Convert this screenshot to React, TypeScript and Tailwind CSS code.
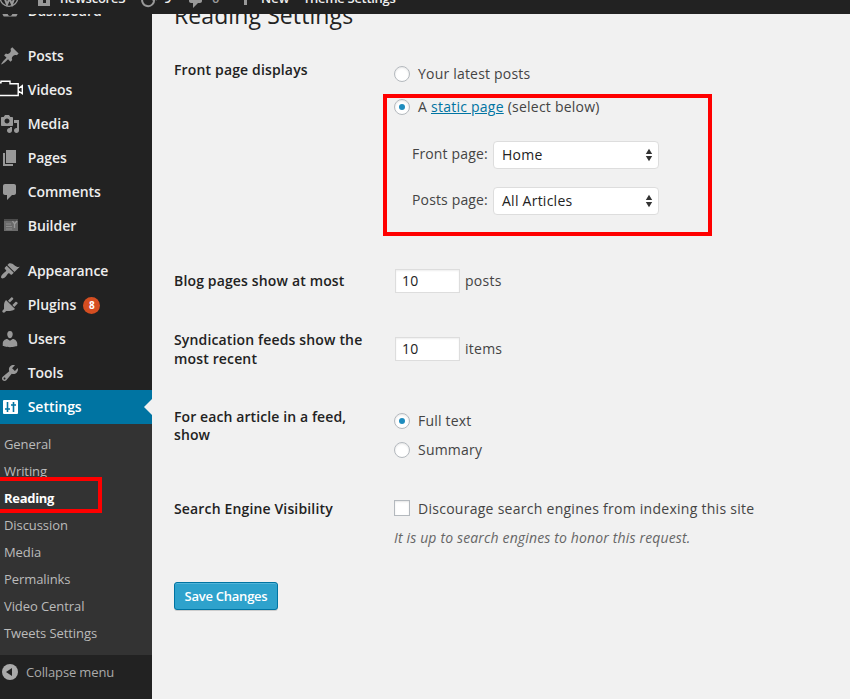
import React from "react";

const paths = {
  pin: "M10.44 3.02l1.82-1.82 6.36 6.35-1.83 1.82c-1.05-.68-2.48-.57-3.41.36l-.75.75c-.92.93-1.04 2.35-.35 3.41l-1.83 1.82-2.41-2.41-2.8 2.79c-.42.42-3.38 2.71-3.8 2.29s1.86-3.39 2.28-3.81l2.79-2.79L4.1 9.36l1.83-1.82c1.05.69 2.48.57 3.4-.36l.75-.75c.93-.92 1.05-2.35.36-3.41z",
  media: "M13 11V4c0-.55-.45-1-1-1h-1.67L9 1H5L3.67 3H2c-.55 0-1 .45-1 1v7c0 .55.45 1 1 1h10c.55 0 1-.45 1-1zM7 4.5c1.38 0 2.5 1.12 2.5 2.5S8.38 9.5 7 9.5 4.5 8.38 4.5 7 5.62 4.5 7 4.5zM14 6h5v10.5c0 1.38-1.12 2.5-2.5 2.5S14 17.88 14 16.5s1.12-2.5 2.5-2.5c.17 0 .34.02.5.05V9h-3V6zm-4 8.05V13h2v3.5c0 1.38-1.12 2.5-2.5 2.5S7 17.88 7 16.5 8.12 14 9.5 14c.17 0 .34.02.5.05z",
  page: "M6 15V2h10v13H6zm-1 1h8v2H3V5h2v11z",
  comment: "M5 2h9c1.1 0 2 .9 2 2v7c0 1.1-.9 2-2 2h-2l-5 5v-5H5c-1.1 0-2-.9-2-2V4c0-1.1.9-2 2-2z",
  brush: "M14.48 11.06L7.41 3.99l1.5-1.5c.5-.56 2.3-.47 3.51.32 1.21.8 1.43 1.28 2.91 2.1 1.18.64 2.45 1.26 4.45.85zm-.71.71L6.7 4.7 4.93 6.47c-.39.39-.39 1.02 0 1.41l1.06 1.06c.39.39.39 1.03 0 1.42-.6.6-1.43 1.11-2.21 1.69-.35.26-.7.53-1.01.84C1.43 14.23.4 16.08 1.4 17.07c.99 1 2.84-.03 4.18-1.36.31-.31.58-.66.85-1.02.57-.78 1.08-1.61 1.69-2.21.39-.39 1.02-.39 1.41 0l1.06 1.06c.39.39 1.02.39 1.41 0z",
  plug: "M13.11 4.36L9.87 7.6 8 5.73l3.24-3.24c.35-.34 1.05-.2 1.56.32.52.51.66 1.21.31 1.55zm-8 1.77l.91-1.12 9.01 9.01-1.19.84c-.71.71-2.63 1.16-3.82 1.16H6.14L4.9 17.26c-.59.59-1.54.59-2.12 0-.59-.58-.59-1.53 0-2.12l1.24-1.24v-3.88c0-1.13.4-3.19 1.09-3.89zm7.26 3.97l3.24-3.24c.34-.35 1.04-.21 1.55.31.52.51.66 1.21.31 1.55l-3.24 3.25z",
  user: "M10 9.25c-2.27 0-2.73-3.44-2.73-3.44C7 4.02 7.82 2 9.97 2c2.16 0 2.98 2.02 2.71 3.81 0 0-.41 3.44-2.68 3.44zm0 2.57L12.72 10c2.39 0 4.52 2.33 4.52 4.53v2.49s-3.65 1.13-7.24 1.13c-3.65 0-7.24-1.13-7.24-1.13v-2.49c0-2.25 1.94-4.48 4.47-4.48z",
  wrench: "M16.68 9.77c-1.34 1.34-3.3 1.67-4.95.99l-5.41 6.52c-.99.99-2.59.99-3.58 0s-.99-2.59 0-3.57l6.52-5.42c-.68-1.65-.35-3.61.99-4.95 1.28-1.28 3.12-1.62 4.72-1.06l-2.89 2.89 2.82 2.82 2.86-2.87c.53 1.58.18 3.39-1.08 4.65zM3.81 16.21c.4.39 1.04.39 1.43 0 .4-.4.4-1.04 0-1.43-.39-.4-1.03-.4-1.43 0-.39.39-.39 1.03 0 1.43z",
  gauge: "M3.76 15.500h12.48c1.1-1.4 1.76-3.1 1.76-5 0-4.4-3.6-8-8-8s-8 3.6-8 8c0 1.9.66 3.6 1.76 5zM10 8l2 4a2.200 2.200 0 1 1-4 0z",
};

const Icon = ({ d }: { d: string }) => (
  <svg viewBox="0 0 20 20" className="h-5 w-5 shrink-0 fill-[#999]" fillRule="evenodd"><path d={d} /></svg>
);

const Camera = () => (
  <svg viewBox="0 0 24 20" className="-mr-1 h-5 w-6 shrink-0" fill="none" stroke="#fff" strokeWidth="1.400">
    <path d="M-1 2.700H1V1.200H10V3.700H18.200V15.500H-1M18.500 8.500L22.300 5.700V13.700L18.500 11" />
  </svg>
);

const Builder = () => (
  <svg viewBox="0 0 20 20" className="h-5 w-5 shrink-0">
    <path d="M4 3h14v12H4z" fill="#6b6b6b" />
    <path d="M4 3h14v2H4z" fill="#4c4c4c" />
    <path d="M6 8h5M6 10.500h6M6 13h6" stroke="#8c8c8c" />
    <path d="M12.500 5l2 3v4M17 5l-2.500 3" stroke="#999" strokeWidth="1.300" fill="none" />
  </svg>
);

const Settings = () => (
  <svg viewBox="0 0 20 20" className="h-5 w-5 shrink-0">
    <rect x="3" y="3" width="15" height="14" rx="1" fill="#fff" />
    <path d="M7.500 5v10M5 12h5M13.500 5v10M11 8h5" stroke="#0074a2" strokeWidth="1.600" />
  </svg>
);

function Item({ icon, label, children, active }: { icon: React.ReactNode; label: string; children?: React.ReactNode; active?: boolean }) {
  return (
    <li className={active ? "relative flex h-[34px] items-center bg-[#0074a2] text-white" : "flex h-[34px] items-center text-[#eee]"}>
      {icon}
      <span className="ml-[7.700px] text-[14px] leading-[18px] font-semibold tracking-[-0.03px]">{label}</span>
      {children}
    </li>
  );
}

function Radio({ checked }: { checked?: boolean }) {
  return (
    <span className="relative top-px mr-2 flex h-4 w-4 shrink-0 items-center justify-center rounded-full border border-[#b4b9be] bg-white shadow-[inset_0_1px_2px_rgba(0,0,0,.1)]">
      {checked && <span className="h-1.5 w-1.5 rounded-full bg-[#1e8cbe]" />}
    </span>
  );
}

function Select({ value }: { value: string }) {
  return (
    <button className="ml-[5px] flex h-7 w-[166px] items-center justify-between rounded-[4px] border border-[#ddd] bg-white pr-[5px] pl-2 text-[#222]">
      <span className="pb-0.5 tracking-[0.25px]">{value}</span>
      <svg viewBox="0 0 8 14" className="h-[14px] w-2 fill-[#333]"><path d="M0.800 6L4 0.800L7.200 6ZM0.800 8H7.200L4 13.200Z" /></svg>
    </button>
  );
}

const Label = ({ children }: { children: React.ReactNode }) => (
  <div className="w-[220px] shrink-0 text-[14px] leading-[18.500px] font-semibold tracking-[0.15px] text-[#222]">{children}</div>
);

const NumberBox = () => (
  <div className="mr-[5px] ml-px flex h-6 w-[65px] items-center border border-[#ddd] bg-white pb-0.5 pl-1.5 text-[#222] shadow-[inset_0_1px_2px_rgba(0,0,0,.07)]">10</div>
);

const submenu = ["General", "Writing", "Reading", "Discussion", "Media", "Permalinks", "Video Central", "Tweets Settings"];

export default function App() {
  return (
    <div className="relative h-[699px] w-[850px] overflow-hidden bg-[#f1f1f1] font-['Open_Sans','Noto_Sans',sans-serif] text-[14px] text-[#444]">
      <header className="h-[14px] overflow-hidden bg-[#222] text-[13px] font-semibold text-[#eee]">
        <div className="-mt-[17px] flex h-8 items-center">
          <svg viewBox="0 0 20 20" className="mt-px h-5 w-5 shrink-0 overflow-visible">
            <circle cx="9" cy="7.500" r="8.800" fill="none" stroke="#999" strokeWidth="1.300" />
            <path d="M3 4l4 10.500L9.500 8.500 12 14.500l3.500-10M2 4h4.500l3 7" fill="none" stroke="#999" strokeWidth="2" />
          </svg>
          <svg viewBox="0 0 14 20" className="ml-[17px] h-5 w-[14px] shrink-0 fill-[#999]"><path fillRule="evenodd" d="M1 5l6-5 6 5v12H1zM6 9v5h3v-5z" /></svg>
          <span className="ml-[9px] w-[82px] tracking-[-0.25px]">newscore3</span>
          <svg viewBox="0 0 16 20" className="-ml-px h-5 w-4 shrink-0" fill="none" stroke="#999" strokeWidth="2"><path d="M2 8a6 6 0 1 0 11 2M11 11l3-3 2 3" /></svg>
          <span className="ml-[7px] w-[24px]">9</span>
          <svg viewBox="0 0 20 20" className="mt-0.5 -ml-[2px] h-5 w-5 shrink-0 fill-[#999]"><path d={paths.comment} /></svg>
          <span className="ml-[6px] w-[32px] text-[#999]">0</span>
          <svg viewBox="0 0 14 14" className="-ml-[6px] h-[14px] w-[14px] shrink-0" stroke="#999" strokeWidth="3"><path d="M7.500 0v13M1 4h13" /></svg>
          <span className="ml-[9px] w-[42px]">New</span>
          <span className="tracking-[-0.3px]">Theme Settings</span>
        </div>
      </header>

      <div className="flex h-[685px]">
        <nav className="w-[152px] shrink-0 overflow-hidden bg-[#222]">
          <ul className="-mt-5">
            <Item icon={<Icon d={paths.gauge} />} label="Dashboard" />
            <li className="h-[11px]" />
            <Item icon={<Icon d={paths.pin} />} label="Posts" />
            <Item icon={<Camera />} label="Videos" />
            <Item icon={<Icon d={paths.media} />} label="Media" />
            <Item icon={<Icon d={paths.page} />} label="Pages" />
            <Item icon={<Icon d={paths.comment} />} label="Comments" />
            <Item icon={<Builder />} label="Builder" />
            <li className="h-[11px]" />
            <Item icon={<Icon d={paths.brush} />} label="Appearance" />
            <Item icon={<Icon d={paths.plug} />} label="Plugins">
              <span className="ml-[7px] flex h-[17px] w-[17px] items-center justify-center rounded-full bg-[#d54e21] text-[10px] leading-none font-bold text-white">8</span>
            </Item>
            <Item icon={<Icon d={paths.user} />} label="Users" />
            <Item icon={<Icon d={paths.wrench} />} label="Tools" />
            <Item icon={<Settings />} label="Settings" active>
              <span className="absolute top-[9px] right-0 border-y-8 border-r-8 border-y-transparent border-r-[#f1f1f1]" />
            </Item>
          </ul>
          <ul className="h-[231px] bg-[#333] pt-[7px] pl-1 text-[13px] text-[#bbb]">
            {submenu.map((s) => (
              <li key={s} className={s === "Reading" ? "flex h-[27px] items-center font-bold tracking-[-0.3px] text-white" : "flex h-[27px] items-center tracking-[-0.08px]"}>{s}</li>
            ))}
          </ul>
          <div className="flex h-[34px] items-center text-[13px] text-[#aaa]">
            <svg viewBox="0 0 20 20" className="h-5 w-5"><circle cx="10" cy="10" r="8" fill="#aaa" /><path d="M12 6v8l-6-4z" fill="#222" /></svg>
            <span className="mt-0.5 ml-1.5 tracking-[-0.14px]">Collapse menu</span>
          </div>
        </nav>

        <main className="min-w-0 flex-1 pl-[22px]">
          <div className="h-9 overflow-hidden">
            <h1 className="-mt-[13px] text-[23px] leading-[29px] tracking-[0.1px] text-[#222]">Reading Settings</h1>
          </div>
          <section className="flex h-[206px] pt-[11px]">
            <Label>Front page displays</Label>
            <div className="pt-[2px] tracking-[0.2px]">
              <div className="flex h-5 items-center"><Radio />Your latest posts</div>
              <div className="mt-[13px] flex h-5 items-center tracking-[0.24px]"><Radio checked /><span>A <a className="text-[#0074a2] underline">static page</a> (select below)</span></div>
              <div className="mt-[25px] flex h-7 items-center pl-[18px]"><span className="w-[76px] pb-[3px] tracking-[0.15px] whitespace-nowrap">Front page:</span><Select value="Home" /></div>
              <div className="mt-[18px] flex h-7 items-center pl-[18px]"><span className="w-[76px] pb-[3px] tracking-[0.15px] whitespace-nowrap">Posts page:</span><Select value="All Articles" /></div>
            </div>
          </section>
          <section className="flex h-[68px] pt-[13px]">
            <div className="pt-[3px]"><Label>Blog pages show at most</Label></div>
            <div className="flex h-6 items-center tracking-[0.25px]"><NumberBox /><span className="pb-0.5">posts</span></div>
          </section>
          <section className="flex h-[77px] pt-[7px]">
            <Label>Syndication feeds show the<br />most recent</Label>
            <div className="mt-1.5 flex h-6 items-center tracking-[0.25px]"><NumberBox /><span className="pb-0.5">items</span></div>
          </section>
          <section className="flex h-[90px] pt-[7px]">
            <div className="w-[220px] shrink-0 leading-[18px] font-semibold tracking-[0.1px] text-[#222]">For each article in a feed,<br />show</div>
            <div className="pt-[2px] tracking-[0.2px]">
              <div className="flex h-5 items-center"><Radio checked />Full text</div>
              <div className="mt-[9px] flex h-5 items-center"><Radio />Summary</div>
            </div>
          </section>
          <section className="flex h-[91px] pt-[7px]">
            <div className="pt-[2px]"><Label>Search Engine Visibility</Label></div>
            <div>
              <div className="flex h-5 items-center tracking-[0.27px]">
                <span className="mr-2 h-4 w-4 border border-[#b4b9be] bg-white shadow-[inset_0_1px_2px_rgba(0,0,0,.1)]" />
                Discourage search engines from indexing this site
              </div>
              <p className="mt-[10px] leading-5 tracking-[0.15px] text-[#666] italic">It is up to search engines to honor this request.</p>
            </div>
          </section>
          <button className="h-7 w-[104px] rounded-[3px] border border-[#0074a2] bg-[#2ea2cc] pt-px text-[13px] font-semibold tracking-[-0.25px] text-white shadow-[inset_0_1px_0_rgba(120,200,230,.5),0_1px_0_rgba(0,0,0,.15)]">Save Changes</button>
        </main>
      </div>

      <div className="absolute top-[94px] left-[383px] h-[142px] w-[329px] border-4 border-[#f00]" />
      <div className="absolute top-[477px] -left-1 h-9 w-[106px] border-4 border-[#f00]" />
    </div>
  );
}
